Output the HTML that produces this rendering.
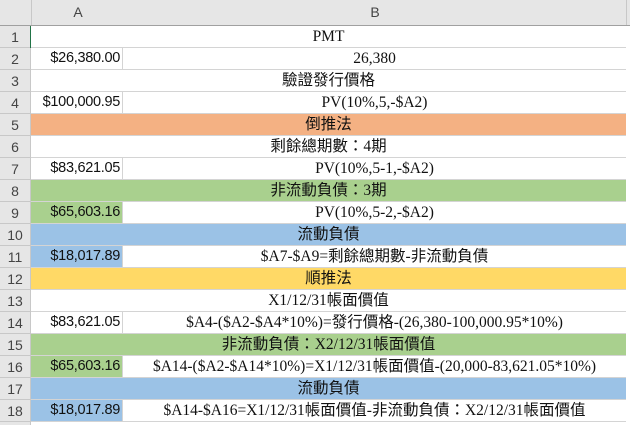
<!DOCTYPE html><html><head><meta charset="utf-8"><style>
body{margin:0;width:630px;height:425px;overflow:hidden;background:#fff;font-family:"Liberation Serif","Noto Sans CJK TC",serif;font-size:15.5px;color:#111;position:relative}
.h{position:absolute;background:#e6e6e6;color:#444;font-family:"Liberation Sans",sans-serif;font-size:14px;text-align:center}
.r{position:absolute;left:31px;width:595px;height:22px;border-bottom:1px solid #d4d4d4;box-sizing:border-box}
.a{position:absolute;left:0;width:92px;height:21px;line-height:21px;text-align:right;padding-right:2px;box-sizing:border-box;border-right:1px solid #d4d4d4;font-family:"Liberation Sans",sans-serif;font-size:14.5px;letter-spacing:-0.3px}
.b{position:absolute;left:92px;width:503px;height:21px;line-height:21px;text-align:center;background:#fff;white-space:nowrap}
.m{position:absolute;left:0;width:595px;height:21px;line-height:21px;text-align:center}
</style></head><body>
<div class="h" style="left:0;top:0;width:630px;height:26px;border-bottom:1px solid #a0a0a0;box-sizing:border-box"></div>
<div class="h" style="left:31px;top:0;width:92px;height:25px;line-height:25px;border-right:1px solid #c8c8c8;border-left:1px solid #c8c8c8">A</div>
<div class="h" style="left:124px;top:0;width:502px;height:25px;line-height:25px;border-right:1px solid #c8c8c8">B</div>
<div class="h" style="left:0;top:26px;width:30px;height:399px;border-right:1px solid #c8c8c8"></div>
<div style="position:absolute;left:29px;top:26px;width:2px;height:22px;background:#217346"></div>
<div id="rows"></div>
<script>
var d=[
["m","","PMT"],["a","$26,380.00","26,380"],["m","","驗證發行價格"],["a","$100,000.95","PV(10%,5,-$A2)"],
["m","","倒推法","#f4b183"],["m","","剩餘總期數：4期"],["a","$83,621.05","PV(10%,5-1,-$A2)"],
["m","","非流動負債：3期","#a9d08e"],["a","$65,603.16","PV(10%,5-2,-$A2)","#a9d08e"],
["m","","流動負債","#9bc2e6"],["a","$18,017.89","$A7-$A9=剩餘總期數-非流動負債","#9bc2e6"],
["m","","順推法","#ffd966"],["m","","X1/12/31帳面價值"],
["a","$83,621.05","$A4-($A2-$A4*10%)=發行價格-(26,380-100,000.95*10%)"],
["m","","非流動負債：X2/12/31帳面價值","#a9d08e"],
["a","$65,603.16","$A14-($A2-$A14*10%)=X1/12/31帳面價值-(20,000-83,621.05*10%)","#a9d08e"],
["m","","流動負債","#9bc2e6"],["a","$18,017.89","$A14-$A16=X1/12/31帳面價值-非流動負債：X2/12/31帳面價值","#9bc2e6"]];
var h="";
d.forEach(function(r,i){var t=26+i*22;
h+='<div class="h" style="left:0;top:'+t+'px;width:30px;height:22px;line-height:22px;border-bottom:1px solid #c8c8c8;box-sizing:border-box">'+(i+1)+'</div>';
h+='<div class="r" style="top:'+t+'px;background:'+(r[3]||"#fff")+'">';
if(r[0]=="m")h+='<div class="m">'+r[2]+'</div>';
else h+='<div class="a">'+r[1]+'</div><div class="b">'+r[2]+'</div>';
h+='</div>';});
document.getElementById("rows").innerHTML=h;
</script>
</body></html>
